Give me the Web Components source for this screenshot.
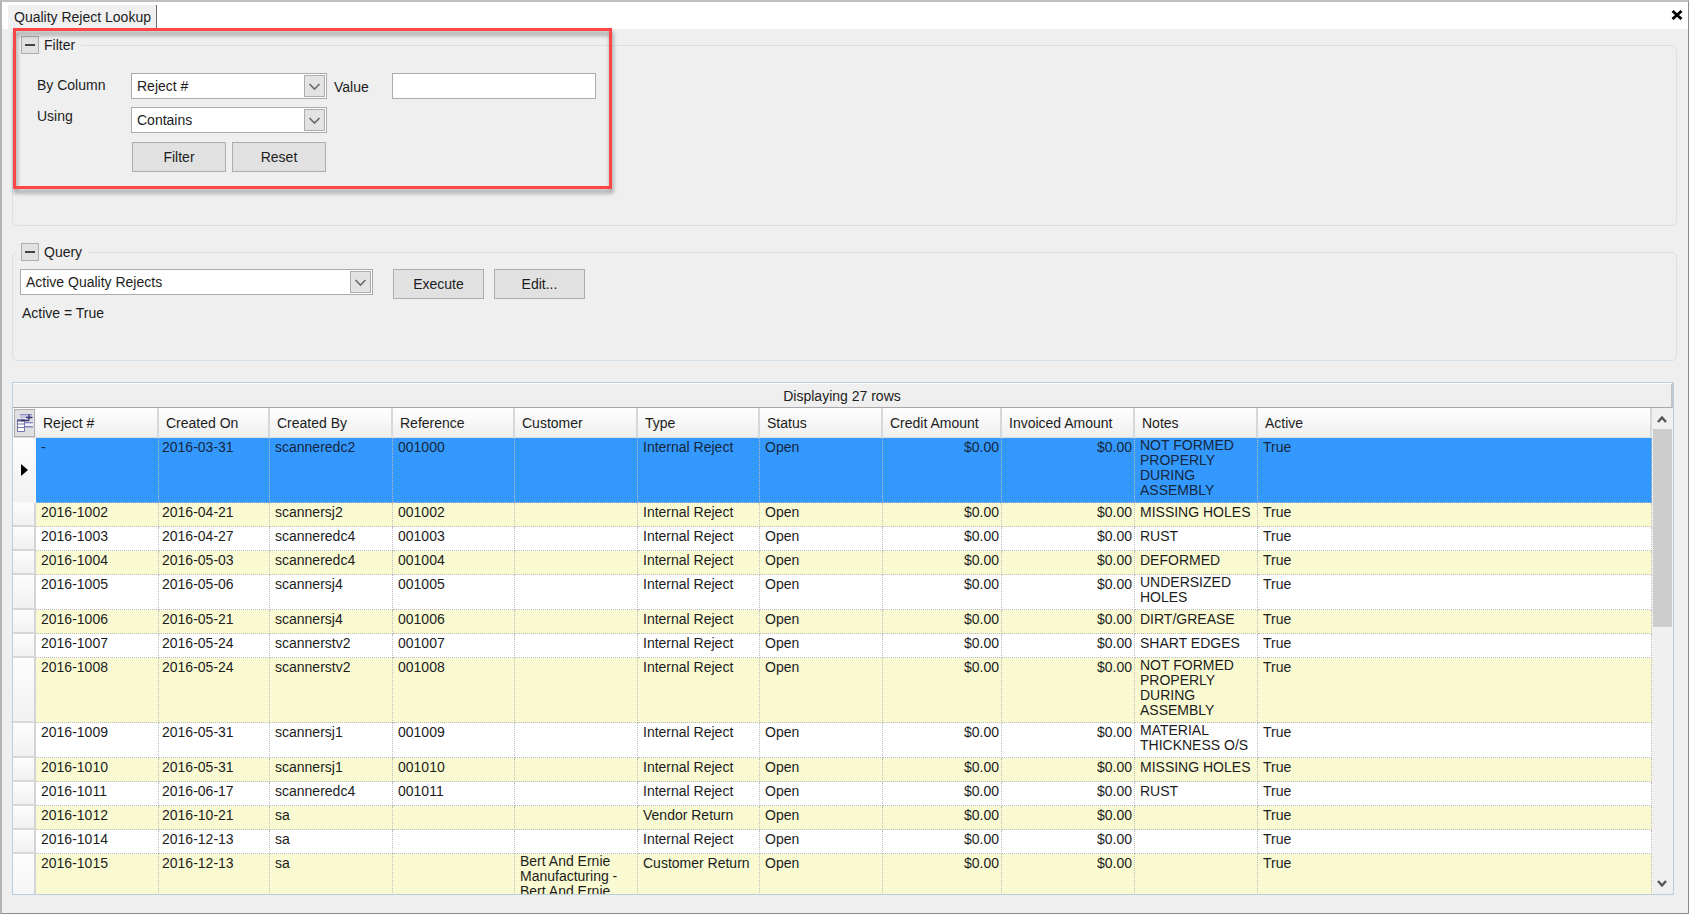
<!DOCTYPE html>
<html lang="en">
<head>
<meta charset="utf-8">
<title>Quality Reject Lookup</title>
<style>
  html, body { height: 100%; margin: 0; }
  body { font: 14px/16px "Liberation Sans", Arial, sans-serif; color: #1c1c1c; background: #efefef; }
</style>
</head>
<body>
<lookup-window caption="Quality Reject Lookup">
  <group-panel caption="Filter" style="--panel-height: 181px">
    <filter-form></filter-form>
  </group-panel>
  <group-panel caption="Query" style="--panel-height: 109px">
    <query-form></query-form>
  </group-panel>
  <reject-grid></reject-grid>
</lookup-window>

<script>
const define = (name, html, setup) => {
  const template = document.createElement('template');
  template.innerHTML = html;
  customElements.define(name, class extends HTMLElement {
    constructor() {
      super();
      this.attachShadow({ mode: 'open' }).append(template.content.cloneNode(true));
    }
    connectedCallback() {
      if (setup && !this.ready) { this.ready = true; setup(this, this.shadowRoot); }
    }
  });
};

define('lookup-window', `
  <style>
    :host { display: flex; flex-direction: column; box-sizing: border-box; height: 100vh;
            border: 2px solid #b4b4b4; border-top-color: #c0c0bc; border-right-width: 1px;
            border-right-color: #8c8c8c; border-bottom: 1px solid #8c8c8c; background: #efefef; }
    header { display: flex; justify-content: space-between; align-items: stretch; flex: none;
             height: 27px; background: #fff; }
    .tab { margin: 3px 0 0 6px; padding: 4px 5px 0 6px; background: #f0f0f0;
           border-right: 1px solid #6e6e6e; }
    .close { width: 22px; border: 0; padding: 0 0 2px; background: none; }
    .close svg { display: block; margin: auto; }
    main { display: flex; flex-direction: column; flex: 1; min-height: 0; padding: 16px 14px 18px 10px; }
    ::slotted(group-panel) { margin: 0 -3px 26px 0; }
  </style>
  <header>
    <div class="tab"></div>
    <button class="close" aria-label="Close"><svg width="12" height="10" viewBox="0 0 12 10"><path d="M1.5 1 L10.5 9 M10.5 1 L1.5 9" stroke="#000" stroke-width="2.8"/></svg></button>
  </header>
  <main><slot></slot></main>
`, (el, root) => { root.querySelector('.tab').textContent = el.getAttribute('caption'); });

define('group-panel', `
  <style>
    :host { display: block; flex: none; }
    section { box-sizing: border-box; height: var(--panel-height); border: 1px solid #d6e1e9;
              border-radius: 5px; }
    h2 { display: flex; align-items: center; gap: 5px; width: max-content; height: 20px;
         margin: -11px 0 0 4px; padding: 0 6px 0 4px; background: #efefef; font: inherit; }
    button { display: grid; place-items: center; width: 18px; height: 18px; padding: 0;
             border: 1px solid #adadad; background: #e1e1e1; }
  </style>
  <section>
    <h2><button aria-label="Collapse"><svg width="10" height="2"><rect width="10" height="2" fill="#444"/></svg></button><span></span></h2>
    <slot></slot>
  </section>
`, (el, root) => { root.querySelector('span').textContent = el.getAttribute('caption'); });

define('combo-box', `
  <style>
    :host { display: block; position: relative; height: 26px; }
    ::slotted(select) { appearance: none; box-sizing: border-box; width: 100%; height: 26px; margin: 0;
             padding: 0 26px 0 5px; border: 1px solid #a9abb3; border-radius: 0;
             background: #fff; font: inherit; color: inherit; }
    svg { position: absolute; top: 2px; right: 2px; box-sizing: border-box; width: 21px; height: 22px;
          border: 1px solid #adadad; background: #e3e3e3; pointer-events: none; }
  </style>
  <slot></slot>
  <svg viewBox="0 0 19 20"><path d="M4.5 8 L9.5 13 L14.5 8" fill="none" stroke="#6a6a6a" stroke-width="1.6"/></svg>
`);

define('push-button', `
  <style>
    :host { display: block; height: 30px; }
    button { box-sizing: border-box; width: 100%; height: 100%; padding: 0; border: 1px solid #adadad;
             background: #e1e1e1; font: inherit; color: inherit; }
  </style>
  <button><slot></slot></button>
`);

define('filter-form', `
  <style>
    :host { display: block; }
    form { display: grid; grid-template-columns: 94px 196px 65px 204px; row-gap: 8px;
           padding: 18px 0 0 24px; }
    label { padding-top: 4px; }
    .using { padding-top: 1px; }
    .value { padding: 6px 0 0 7px; }
    input { box-sizing: border-box; width: 100%; height: 26px; padding: 0 4px;
            border: 1px solid #a9abb3; font: inherit; }
    .second { grid-column: 2; }
    .buttons { grid-column: 2; display: grid; grid-template-columns: 1fr 1fr; gap: 6px; padding: 1px; }
    .highlight { position: absolute; left: 13px; top: 28px; box-sizing: border-box;
                 width: 599px; height: 161px; border: 3px solid #ff4646;
                 filter: drop-shadow(1px 4px 2px rgba(0,0,0,.4)); pointer-events: none; }
  </style>
  <form onsubmit="return false">
    <label for="column">By Column</label><combo-box><select id="column"><option>Reject #</option></select></combo-box>
    <label class="value" for="value">Value</label><input id="value" type="text">
    <label class="using" for="using">Using</label><combo-box class="second"><select id="using"><option>Contains</option></select></combo-box>
    <div class="buttons"><push-button>Filter</push-button><push-button>Reset</push-button></div>
  </form>
  <div class="highlight"></div>
`);

define('query-form', `
  <style>
    :host { display: block; padding: 7px 0 0 7px; }
    form { display: flex; align-items: flex-start; gap: 10px; }
    combo-box { width: 353px; margin-right: 10px; }
    push-button { width: 91px; }
    p { margin: 6px 0 0 2px; }
  </style>
  <form onsubmit="return false">
    <combo-box><select aria-label="Query"><option>Active Quality Rejects</option></select></combo-box>
    <push-button>Execute</push-button><push-button>Edit...</push-button>
  </form>
  <p>Active = True</p>
`);

const R = 'Internal Reject';
const rows = [
  ['-', '2016-03-31', 'scanneredc2', '001000', '', R, 'NOT FORMED PROPERLY DURING ASSEMBLY', 4],
  ['2016-1002', '2016-04-21', 'scannersj2', '001002', '', R, 'MISSING HOLES', 1],
  ['2016-1003', '2016-04-27', 'scanneredc4', '001003', '', R, 'RUST', 1],
  ['2016-1004', '2016-05-03', 'scanneredc4', '001004', '', R, 'DEFORMED', 1],
  ['2016-1005', '2016-05-06', 'scannersj4', '001005', '', R, 'UNDERSIZED HOLES', 2],
  ['2016-1006', '2016-05-21', 'scannersj4', '001006', '', R, 'DIRT/GREASE', 1],
  ['2016-1007', '2016-05-24', 'scannerstv2', '001007', '', R, 'SHART EDGES', 1],
  ['2016-1008', '2016-05-24', 'scannerstv2', '001008', '', R, 'NOT FORMED PROPERLY DURING ASSEMBLY', 4],
  ['2016-1009', '2016-05-31', 'scannersj1', '001009', '', R, 'MATERIAL THICKNESS O/S', 2],
  ['2016-1010', '2016-05-31', 'scannersj1', '001010', '', R, 'MISSING HOLES', 1],
  ['2016-1011', '2016-06-17', 'scanneredc4', '001011', '', R, 'RUST', 1],
  ['2016-1012', '2016-10-21', 'sa', '', '', 'Vendor Return', '', 1],
  ['2016-1014', '2016-12-13', 'sa', '', '', R, '', 1],
  ['2016-1015', '2016-12-13', 'sa', '', 'Bert And Ernie Manufacturing - Bert And Ernie', 'Customer Return', '', 4],
];
const heads = ['Reject #', 'Created On', 'Created By', 'Reference', 'Customer', 'Type', 'Status',
  'Credit Amount', 'Invoiced Amount', 'Notes', 'Active'];
const widths = [23, 123, 111, 123, 122, 123, 122, 123, 119, 133, 123];

define('reject-grid', `
  <style>
    :host { display: flex; flex-direction: column; flex: 1; min-height: 0; margin-top: -5px;
            border: 1px solid #b9cfe0; overflow: hidden; }
    .caption { flex: none; box-sizing: border-box; height: 25px; padding-top: 4px; text-align: center;
               border-top: 1px solid #fff; border-right: 2px solid #bfc5ca; border-bottom: 1px solid #a8a8a8; }
    .view { display: flex; flex: 1; min-height: 0; }
    .rows { flex: 1; min-width: 0; overflow: hidden; }
    table { width: 100%; table-layout: fixed; border-collapse: separate; border-spacing: 0; }
    th, td { box-sizing: border-box; overflow: hidden; text-align: left; vertical-align: top; font-weight: normal; }
    thead th { height: 30px; padding: 0 0 0 7px; vertical-align: middle; white-space: nowrap;
               background: linear-gradient(#fff, #efefef); border-right: 2px solid #d5d9db; border-bottom: 1px solid #dcdcdc; }
    thead th.corner { padding: 1px 0 0 1px; border-right: 0; vertical-align: top; }
    .corner svg { display: block; }
    tbody tr { height: 24px; background: #fff; }
    tbody tr.lines2 { height: 35px; }
    tbody tr.lines4 { height: 65px; }
    tbody tr:nth-child(even) { background: #fafad2; }
    tbody tr.selected { background: #39f; color: #16263c; }
    td { padding: 1px 0 0 5px; border-right: 1px dotted #bcbcbc; border-bottom: 1px dotted #bcbcbc; }
    td.date { padding-left: 3px; }
    td.money { padding: 1px 2px 0 0; text-align: right; }
    .lines2 td.wrap, .lines4 td.wrap { padding-top: 0; line-height: 15px; }
    tbody th { padding: 0; vertical-align: middle; background: linear-gradient(#fdfdfd, #f1f1f1);
               border-right: 2px solid #d4d4d4; border-bottom: 2px solid #d8d8d8; }
    tbody .selected th { border-color: #f4f4f4; }
    tbody th svg { display: block; margin-left: 8px; }
    .scroll { flex: none; display: flex; flex-direction: column; width: 19px; padding: 0 1px; background: #f0f0f0; }
    .scroll svg { flex: none; width: 19px; height: 21px; }
    .track { flex: 1; }
    .thumb { height: 44.5%; background: #cdcdcd; }
  </style>
  <div class="caption">Displaying 27 rows</div>
  <div class="view">
    <div class="rows">
      <table><colgroup></colgroup><thead><tr></tr></thead><tbody></tbody></table>
    </div>
    <div class="scroll">
      <svg viewBox="0 0 19 21"><path d="M5 14 L9 9.5 L13 14" fill="none" stroke="#555" stroke-width="2.4"/></svg>
      <div class="track"><div class="thumb"></div></div>
      <svg viewBox="0 0 19 21"><path d="M5 8 L9 12.5 L13 8" fill="none" stroke="#555" stroke-width="2.4"/></svg>
    </div>
  </div>
`, (el, root) => {
  root.querySelector('colgroup').innerHTML = widths.map(w => `<col style="width:${w}px">`).join('') + '<col>';
  root.querySelector('thead tr').innerHTML = `<th class="corner" aria-label="Choose fields">
    <svg width="21" height="28" viewBox="0 0 21 28"><rect x=".5" y=".5" width="20" height="27" fill="#e0e0e2" stroke="#adadad"/>
    <path d="M6 5h12v4H6z" fill="#c3c3e0"/><path d="M6 5h12v1H6z" fill="#8d8dc0"/>
    <path d="M10 13h9v1.5h-9zM10 17h9v1.5h-9z" fill="#8585bb"/><path d="M10 14.5h9V17h-9z" fill="#f2f2fb"/>
    <path d="M3.5 11h7v11.500h-7z" fill="#fff" stroke="#7676ac"/><path d="M3 11.500h8" stroke="#5c5c9c" stroke-width="2"/>
    <path d="M3.500 15h7M3.500 18.500h7" stroke="#7676ac"/>
    <path d="M15 5.500v6M12 8.500h6.500M7 11.500h8" stroke="#34346e" stroke-width="1.300"/></svg></th>`
    + heads.map(h => `<th scope="col">${h}</th>`).join('');
  root.querySelector('tbody').innerHTML = rows.map((r, i) => `
    <tr class="lines${r[7]}${i ? '' : ' selected'}">
      <th scope="row">${i ? '' : '<svg width="7" height="12"><path d="M0 0L7 6L0 12z"/></svg>'}</th>
      <td>${r[0]}</td><td class="date">${r[1]}</td><td>${r[2]}</td><td>${r[3]}</td><td class="wrap">${r[4]}</td>
      <td>${r[5]}</td><td>Open</td><td class="money">$0.00</td><td class="money">$0.00</td><td class="wrap">${r[6]}</td><td>True</td>
    </tr>`).join('');
});
</script>
</body>
</html>
